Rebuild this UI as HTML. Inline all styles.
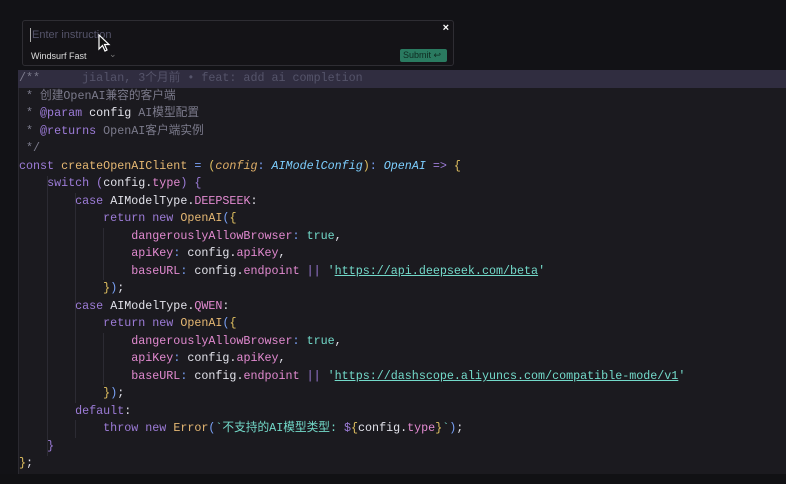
<!DOCTYPE html>
<html><head><meta charset="utf-8"><style>
*{margin:0;padding:0;box-sizing:border-box}
body{width:786px;height:484px;overflow:hidden;background:#121216;position:relative;font-family:"Liberation Sans",sans-serif}
#code{position:absolute;left:18px;top:70px;width:768px;height:404px;background:#1b1a1f;border-left:1px solid #2a2930}
#bottom{position:absolute;left:0;top:474px;width:786px;height:10px;background:#111114}
#hl{position:absolute;left:18px;top:70px;width:768px;height:18px;background:#302d40}
.l{position:absolute;left:19px;height:17.5px;line-height:17.5px;white-space:pre;font-family:"Liberation Mono","Noto Sans CJK SC",monospace;font-size:11.7px;color:#c0caf5}
.c{color:#7c7b8c}.k{color:#9d7cd8}.f{color:#e6b873}.p{color:#e0af68;font-style:italic}.t{color:#7dcfff;font-style:italic}
.pr{color:#e28ad0}.b{color:#73daca}.s{color:#73daca;text-decoration:underline}.w{color:#e2e2ea}.y{color:#e0c060}.g{color:#7aa2f7}
.ann{color:#55546a}
.guide{position:absolute;width:1px;background:#2c2b33}
#w{position:absolute;left:22px;top:20px;width:432px;height:46px;background:#141317;border:1px solid #2e2d33;border-radius:3px}
</style></head><body>
<div id="code"></div><div id="bottom"></div><div id="hl"></div>
<div class="guide" style="left:47px;top:176px;height:280px"></div>
<div class="guide" style="left:75px;top:193px;height:210px"></div>
<div class="guide" style="left:103px;top:228px;height:52px"></div>
<div class="guide" style="left:103px;top:333px;height:52px"></div>
<div class="guide" style="left:75px;top:420px;height:18px"></div>
<div id="w">
<div style="position:absolute;left:7px;top:7px;width:1px;height:14px;background:#aaa"></div>
<div style="position:absolute;left:9px;top:8px;font-size:11px;color:#55546a">Enter instruction</div>
<div style="position:absolute;right:4px;top:1px;font-size:11px;color:#fff;font-weight:bold">×</div>
<div style="position:absolute;left:8px;top:30px;font-size:9px;color:#ddd">Windsurf Fast</div>
<div style="position:absolute;left:86px;top:28px;font-size:9px;color:#777">⌄</div>
<div style="position:absolute;left:377px;top:28px;width:47px;height:13px;background:#2a7a60;border-radius:2px;font-size:9px;color:#0e2a20;line-height:13px;padding-left:3px">Submit ↩</div>
</div>
<svg style="position:absolute;left:98px;top:34px" width="14" height="20" viewBox="0 0 14 20"><path d="M1 1 L1 15 L4.5 11.5 L7 17 L9 16 L6.5 10.5 L11 10.5 Z" fill="#111" stroke="#fff" stroke-width="1.2"/></svg>
<div class="l c" style="top:70px">/**      <span class="ann">jialan, 3个月前 • feat: add ai completion</span></div>
<div class="l c" style="top:88px"> * 创建OpenAI兼容的客户端</div>
<div class="l c" style="top:105px"> * <span class="k">@param</span> <span class="w">config</span> AI模型配置</div>
<div class="l c" style="top:123px"> * <span class="k">@returns</span> OpenAI客户端实例</div>
<div class="l c" style="top:140px"> */</div>
<div class="l" style="top:158px"><span class="k">const</span> <span class="f">createOpenAIClient</span> <span class="g">=</span> <span class="y">(</span><span class="p">config</span><span class="g">:</span> <span class="t">AIModelConfig</span><span class="y">)</span><span class="g">:</span> <span class="t">OpenAI</span> <span class="k">=&gt;</span> <span class="y">{</span></div>
<div class="l" style="top:175px">    <span class="k">switch</span> <span class="k">(</span><span class="w">config.</span><span class="pr">type</span><span class="k">)</span> <span class="k">{</span></div>
<div class="l" style="top:193px">        <span class="k">case</span> <span class="w">AIModelType.</span><span class="pr">DEEPSEEK</span><span class="w">:</span></div>
<div class="l" style="top:210px">            <span class="k">return</span> <span class="k">new</span> <span class="f">OpenAI</span><span class="g">(</span><span class="y">{</span></div>
<div class="l" style="top:228px">                <span class="pr">dangerouslyAllowBrowser</span><span class="g">:</span> <span class="b">true</span><span class="w">,</span></div>
<div class="l" style="top:245px">                <span class="pr">apiKey</span><span class="g">:</span> <span class="w">config.</span><span class="pr">apiKey</span><span class="w">,</span></div>
<div class="l" style="top:263px">                <span class="pr">baseURL</span><span class="g">:</span> <span class="w">config.</span><span class="pr">endpoint</span> <span class="k">||</span> <span class="b">'<span class="s">https://api.deepseek.com/beta</span>'</span></div>
<div class="l" style="top:280px">            <span class="y">}</span><span class="g">)</span><span class="w">;</span></div>
<div class="l" style="top:298px">        <span class="k">case</span> <span class="w">AIModelType.</span><span class="pr">QWEN</span><span class="w">:</span></div>
<div class="l" style="top:315px">            <span class="k">return</span> <span class="k">new</span> <span class="f">OpenAI</span><span class="g">(</span><span class="y">{</span></div>
<div class="l" style="top:333px">                <span class="pr">dangerouslyAllowBrowser</span><span class="g">:</span> <span class="b">true</span><span class="w">,</span></div>
<div class="l" style="top:350px">                <span class="pr">apiKey</span><span class="g">:</span> <span class="w">config.</span><span class="pr">apiKey</span><span class="w">,</span></div>
<div class="l" style="top:368px">                <span class="pr">baseURL</span><span class="g">:</span> <span class="w">config.</span><span class="pr">endpoint</span> <span class="k">||</span> <span class="b">'<span class="s">https://dashscope.aliyuncs.com/compatible-mode/v1</span>'</span></div>
<div class="l" style="top:385px">            <span class="y">}</span><span class="g">)</span><span class="w">;</span></div>
<div class="l" style="top:403px">        <span class="k">default</span><span class="w">:</span></div>
<div class="l" style="top:420px">            <span class="k">throw</span> <span class="k">new</span> <span class="f">Error</span><span class="g">(</span><span class="b">`不支持的AI模型类型: </span><span class="k">$</span><span class="y">{</span><span class="w">config.</span><span class="pr">type</span><span class="y">}</span><span class="b">`</span><span class="g">)</span><span class="w">;</span></div>
<div class="l" style="top:438px">    <span class="k">}</span></div>
<div class="l" style="top:455px"><span class="y">}</span><span class="w">;</span></div>
</body></html>
